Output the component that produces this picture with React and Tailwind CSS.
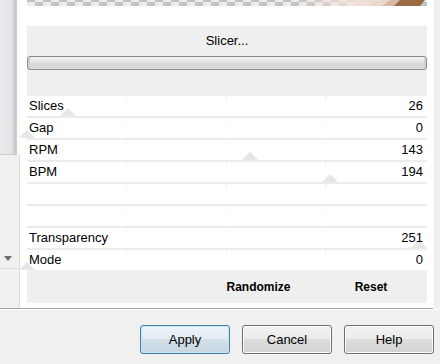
import React from "react";

const rows = [
  { label: "Slices", value: 26 },
  { label: "Gap", value: 0 },
  { label: "RPM", value: 143 },
  { label: "BPM", value: 194 },
  { label: "", value: null },
  { label: "", value: null },
  { label: "Transparency", value: 251 },
  { label: "Mode", value: 0, last: true },
];

function Row({ label, value, last }) {
  return (
    <div
      className={
        "relative flex items-center justify-between pl-[2px] pr-[4px] " +
        (last ? "h-[20px]" : "h-[22px] border-b-2 border-[#ececec]")
      }
    >
      <div className="absolute left-[99px] top-0 w-px h-[5px] bg-[#f3f3f3]" />
      <div className="absolute left-[199px] top-0 w-px h-[5px] bg-[#f3f3f3]" />
      <div className="absolute left-[298px] top-0 w-px h-[5px] bg-[#f3f3f3]" />
      {value !== null && (
        <svg
          className="absolute bottom-0"
          style={{ left: (value / 255) * 398 - 8 }}
          width="16"
          height="8"
          viewBox="0 0 16 8"
        >
          <polygon points="0,8 8,0 16,8" fill="#e6e6e6" />
        </svg>
      )}
      <span className="relative">{label}</span>
      <span className="relative">{value !== null ? value : ""}</span>
    </div>
  );
}

function Checker() {
  const cols = Array.from({ length: 50 }, (_, i) => i);
  return (
    <div className="relative h-[6px] overflow-hidden flex">
      {cols.map((i) => (
        <div key={i} className="w-[8px] shrink-0 flex flex-col">
          <div className={"h-[2px] " + (i % 2 === 0 ? "bg-[#c2c2c2]" : "bg-[#ececec]")} />
          <div className={"h-[4px] " + (i % 2 === 0 ? "bg-[#ececec]" : "bg-[#c2c2c2]")} />
        </div>
      ))}
      <div className="absolute left-[265px] top-0 h-[6px] w-[110px] bg-[linear-gradient(to_right,rgba(245,232,226,0)_0%,rgba(242,226,218,0.9)_60%,#e9d2c4_100%)]" />
      <svg className="absolute left-[355px] top-0" width="43" height="6" viewBox="0 0 43 6">
        <polygon points="10,6 16,0 43,0 38,6" fill="#9a6a45" />
        <polygon points="0,6 8,0 18,0 12,6" fill="#d8b8a4" />
      </svg>
    </div>
  );
}

function Btn({ children, primary }) {
  return (
    <button
      className={
        "w-[90px] h-[29px] rounded-[3px] border text-[13px] text-black flex items-center justify-center " +
        (primary
          ? "border-[#3d7ea6] bg-[linear-gradient(to_bottom,#eef4f8_0%,#e2ebf1_50%,#d3e0e9_50%,#c6d6e1_100%)] shadow-[inset_0_0_0_1px_#cfe6f3]"
          : "border-[#707070] bg-[linear-gradient(to_bottom,#f2f2f2_0%,#ebebeb_50%,#dddddd_50%,#d2d2d2_100%)] shadow-[inset_0_0_0_1px_#fbfbfb]")
      }
    >
      {children}
    </button>
  );
}

export default function App() {
  return (
    <div
      className="w-[440px] h-[364px] bg-[#f0f0f0] flex flex-col overflow-hidden text-[13px] text-black"
      style={{ fontFamily: '"Liberation Sans", Arial, sans-serif' }}
    >
      <div className="flex h-[309px]">
        <div className="w-[433px] flex border-b border-r border-[#a0a0a0]">
          <div className="w-[20px] flex flex-col">
            <div className="h-[155px] flex">
              <div className="w-[17px] border-b border-[#c9c9c9] bg-[linear-gradient(to_right,#ebebeb_0%,#e6e6e6_70%,#d2d2d9_78%,#c5c5cd_95%,#dcdce0_100%)]" />
              <div className="w-[3px] bg-[#fafafa]" />
            </div>
            <div className="flex-1 flex flex-col bg-[#f0f0f0] border-r border-[#dcdcdc]">
              <div className="h-[93px]" />
              <div className="h-[21px] flex items-center pl-[4px] border-b border-[#dedede]">
                <svg width="8" height="5" viewBox="0 0 8 5">
                  <polygon points="0,0 8,0 4,5" fill="#6e6e6e" />
                </svg>
              </div>
            </div>
          </div>
          <div className="flex-1 bg-white px-[7px] flex flex-col">
            <Checker />
            <div className="h-[20px]" />
            <div className="h-[70px] bg-[#efefef] flex flex-col">
              <div className="h-[30px] flex items-center justify-center">Slicer...</div>
              <div className="h-[14px] rounded-[3px] border border-[#8c8c8c] bg-[linear-gradient(to_bottom,#f4f4f4_0%,#e4e4e4_40%,#d6d6d6_60%,#dcdcdc_100%)] shadow-[inset_2px_0_0_#d0d0d0,inset_-2px_0_0_#d0d0d0]" />
            </div>
            {rows.map((r, i) => (
              <Row key={i} {...r} />
            ))}
            <div className="h-[33px] bg-[#efefef] flex items-center text-[12px] font-bold">
              <div className="ml-[173px] w-[117px] text-center">Randomize</div>
              <div className="w-[108px] text-center">Reset</div>
            </div>
          </div>
        </div>
        <div className="flex-1" />
      </div>
      <div className="flex-1 border-t border-white flex justify-end items-start pt-[15px] pr-[6px] gap-[12px]">
        <Btn primary>Apply</Btn>
        <Btn>Cancel</Btn>
        <Btn>Help</Btn>
      </div>
    </div>
  );
}
